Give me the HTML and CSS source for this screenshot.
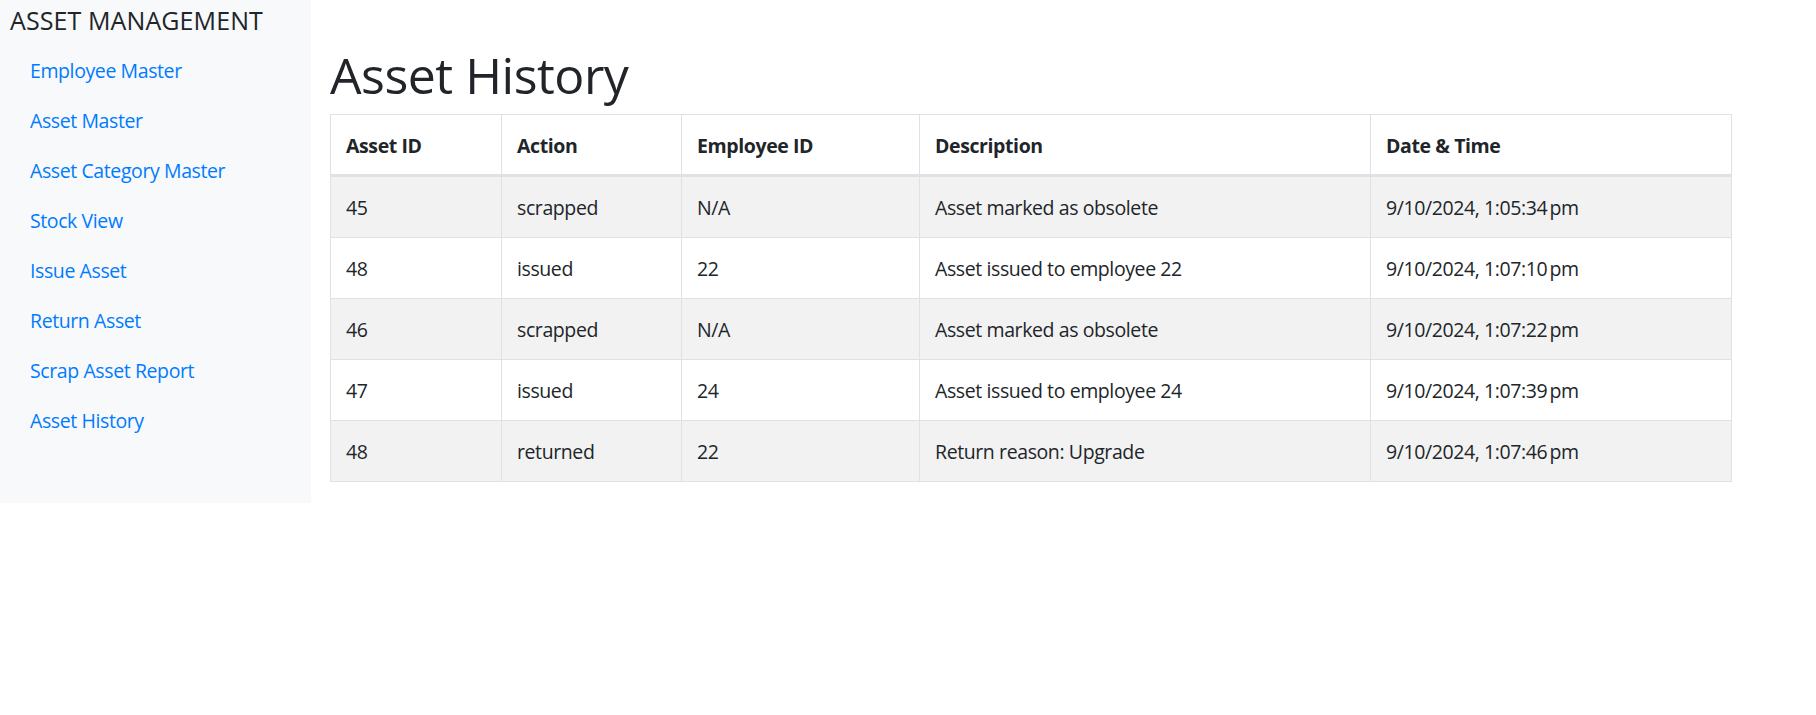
FILE: index.html
```html
<!DOCTYPE html>
<html lang="en">
<head>
<meta charset="utf-8">
<title>Asset History</title>
<link rel="stylesheet" href="styles.css">
</head>
<body>
<div class="layout">
  <aside class="sidebar">
    <div class="brand">ASSET MANAGEMENT</div>
    <ul class="nav">
      <li><a class="nav-link" href="#">Employee Master</a></li>
      <li><a class="nav-link" href="#">Asset Master</a></li>
      <li><a class="nav-link" href="#">Asset Category Master</a></li>
      <li><a class="nav-link" href="#">Stock View</a></li>
      <li><a class="nav-link" href="#">Issue Asset</a></li>
      <li><a class="nav-link" href="#">Return Asset</a></li>
      <li><a class="nav-link" href="#">Scrap Asset Report</a></li>
      <li><a class="nav-link" href="#">Asset History</a></li>
    </ul>
  </aside>
  <main class="main">
    <h1 class="page-title">Asset History</h1>
    <table class="history">
      <colgroup>
        <col class="c-id"><col class="c-action"><col class="c-emp"><col class="c-desc"><col class="c-date">
      </colgroup>
      <thead>
        <tr><th>Asset ID</th><th>Action</th><th>Employee ID</th><th>Description</th><th>Date &amp; Time</th></tr>
      </thead>
      <tbody>
        <tr><td>45</td><td>scrapped</td><td>N/A</td><td>Asset marked as obsolete</td><td>9/10/2024, 1:05:34&#8239;pm</td></tr>
        <tr><td>48</td><td>issued</td><td>22</td><td>Asset issued to employee 22</td><td>9/10/2024, 1:07:10&#8239;pm</td></tr>
        <tr><td>46</td><td>scrapped</td><td>N/A</td><td>Asset marked as obsolete</td><td>9/10/2024, 1:07:22&#8239;pm</td></tr>
        <tr><td>47</td><td>issued</td><td>24</td><td>Asset issued to employee 24</td><td>9/10/2024, 1:07:39&#8239;pm</td></tr>
        <tr><td>48</td><td>returned</td><td>22</td><td>Return reason: Upgrade</td><td>9/10/2024, 1:07:46&#8239;pm</td></tr>
      </tbody>
    </table>
  </main>
</div>
</body>
</html>
```

FILE: styles.css
```css
* { box-sizing: border-box; }
html, body { margin: 0; padding: 0; background: #fff; }
body {
  font-family: "Open Sans", "Noto Sans", sans-serif;
  font-size: 19.5px;
  line-height: 30px;
  color: #212529;
  letter-spacing: -0.4px;
}
.layout {
  display: flex;
  align-items: flex-start;
}
.sidebar {
  width: 311px;
  flex: 0 0 311px;
  background: #f8f9fa;
  padding: 0 0 57px 10px;
}
.brand {
  font-size: 25px;
  font-weight: 500;
  line-height: 40px;
  height: 40px;
  margin-bottom: 6px;
  color: #212529;
  letter-spacing: 0.1px;
}
.nav {
  list-style: none;
  margin: 0;
  padding: 0;
}
.nav-link {
  display: block;
  padding: 10px 20px;
  line-height: 30px;
  color: #007bff;
  text-decoration: none;
}
.main {
  flex: 1;
  padding: 45px 0 0 19px;
}
.page-title {
  margin: 0 0 9px 0;
  font-size: 50px;
  line-height: 60px;
  font-weight: 500;
  letter-spacing: -0.5px;
  color: #212529;
}
.history {
  border-collapse: collapse;
  width: 1401px;
  table-layout: fixed;
}
.c-id { width: 171px; }
.c-action { width: 180px; }
.c-emp { width: 238px; }
.c-desc { width: 451px; }
.c-date { width: 361px; }
.history th, .history td {
  border: 1px solid #dee2e6;
  padding: 16px 15px 14px;
  text-align: left;
  vertical-align: top;
  white-space: nowrap;
}
.history th {
  font-weight: 700;
  border-bottom: 3px solid #dee2e6;
  padding-bottom: 13px;
}
.history tbody tr:nth-child(odd) {
  background: #f2f2f2;
}
```
